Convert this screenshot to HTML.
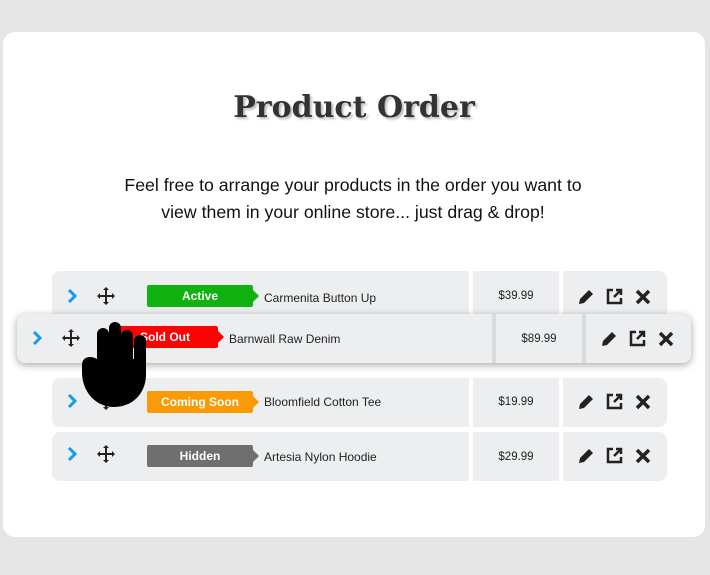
<!DOCTYPE html>
<html><head><meta charset="utf-8"><style>
*{margin:0;padding:0;box-sizing:border-box}
body{width:710px;height:575px;background:#e5e5e5;position:relative;overflow:hidden;font-family:"Liberation Sans",Arial,sans-serif}
.card{position:absolute;left:3px;top:32px;width:702px;height:505px;background:#fff;border-radius:12px}
h1{position:absolute;left:0;width:708px;top:90px;text-align:center;font-family:"DejaVu Serif",serif;font-weight:bold;font-size:30px;color:#333;text-shadow:2px 2px 2px #bbb}
.sub{position:absolute;left:0;width:706px;top:172px;text-align:center;font-size:17.7px;line-height:27px;color:#111}
.row{position:absolute;height:49px}
.seg{position:absolute;top:0;height:49px;background:#eceef0}
.m{border-radius:8px 0 0 8px}
.a{border-radius:0 8px 8px 0}
.badge{position:absolute;top:14px;width:106px;height:22px;color:#fff;font-weight:bold;font-size:12px;line-height:22px;text-align:center;border-radius:2px}
.badge:after{content:"";position:absolute;right:-6px;top:5px;border-left:6px solid;border-left-color:inherit;border-top:6px solid transparent;border-bottom:6px solid transparent}
.name{position:absolute;top:18px;font-size:12px;color:#222}
.price{position:absolute;top:19px;width:100%;text-align:center;font-size:11.5px;color:#222}
svg.i{position:absolute}
.drag{box-shadow:0 2px 8px rgba(0,0,0,.35);border-radius:8px}
</style></head><body>
<div class="card"></div>
<h1>Product Order</h1>
<div class="sub">Feel free to arrange your products in the order you want to<br>view them in your online store... just drag &amp; drop!</div>

<div class="row" style="left:52px;top:271px;width:615px">
 <div class="seg m" style="left:0;width:417px">
  <svg class="i" style="left:14px;top:18px" width="12" height="14" viewBox="0 0 12 14"><path d="M3 1l6 6-6 6" stroke="#1a9be6" stroke-width="3" fill="none"/></svg>
  <svg class="i" style="left:44px;top:15px" width="20" height="20" viewBox="0 0 20 20"><path d="M10 1l3 3h-2v5h5V7l3 3-3 3v-2h-5v5h2l-3 3-3-3h2v-5H4v2L1 10l3-3v2h5V4H7z" fill="#222"/></svg>
  <div class="badge" style="left:95px;background:#0fb20f;border-color:#0fb20f">Active</div>
  <div class="name" style="left:212px;top:20px">Carmenita Button Up</div>
 </div>
 <div class="seg" style="left:421px;width:86px"><div class="price">$39.99</div></div>
 <div class="seg a" style="left:511px;width:104px">
  <svg class="i" style="left:14px;top:17px" width="18" height="18" viewBox="0 0 18 18"><path d="M12 2l4 4-9 9-5 1 1-5z" fill="#222"/></svg>
  <svg class="i" style="left:43px;top:17px" width="17" height="17" viewBox="0 0 17 17"><path d="M7 2H2v13h13v-5" stroke="#222" stroke-width="2.5" fill="none"/><path d="M8 9l7-7M10 2h5v5" stroke="#222" stroke-width="2.5" fill="none"/></svg>
  <svg class="i" style="left:72px;top:18px" width="16" height="16" viewBox="0 0 16 16"><path d="M2 2l12 12M14 2L2 14" stroke="#222" stroke-width="3.5"/></svg>
 </div>
</div>

<div class="row" style="left:52px;top:378px;width:615px">
 <div class="seg m" style="left:0;width:417px">
  <svg class="i" style="left:14px;top:16px" width="12" height="14" viewBox="0 0 12 14"><path d="M3 1l6 6-6 6" stroke="#1a9be6" stroke-width="3" fill="none"/></svg>
  <svg class="i" style="left:44px;top:13px" width="20" height="20" viewBox="0 0 20 20"><path d="M10 1l3 3h-2v5h5V7l3 3-3 3v-2h-5v5h2l-3 3-3-3h2v-5H4v2L1 10l3-3v2h5V4H7z" fill="#222"/></svg>
  <div class="badge" style="left:95px;top:13px;background:#fb9a07;border-color:#fb9a07">Coming Soon</div>
  <div class="name" style="left:212px;top:17px">Bloomfield Cotton Tee</div>
 </div>
 <div class="seg" style="left:421px;width:86px"><div class="price" style="top:18px">$19.99</div></div>
 <div class="seg a" style="left:511px;width:104px">
  <svg class="i" style="left:14px;top:15px" width="18" height="18" viewBox="0 0 18 18"><path d="M12 2l4 4-9 9-5 1 1-5z" fill="#222"/></svg>
  <svg class="i" style="left:43px;top:15px" width="17" height="17" viewBox="0 0 17 17"><path d="M7 2H2v13h13v-5" stroke="#222" stroke-width="2.5" fill="none"/><path d="M8 9l7-7M10 2h5v5" stroke="#222" stroke-width="2.5" fill="none"/></svg>
  <svg class="i" style="left:72px;top:16px" width="16" height="16" viewBox="0 0 16 16"><path d="M2 2l12 12M14 2L2 14" stroke="#222" stroke-width="3.5"/></svg>
 </div>
</div>

<div class="row" style="left:52px;top:432px;width:615px">
 <div class="seg m" style="left:0;width:417px">
  <svg class="i" style="left:14px;top:15px" width="12" height="14" viewBox="0 0 12 14"><path d="M3 1l6 6-6 6" stroke="#1a9be6" stroke-width="3" fill="none"/></svg>
  <svg class="i" style="left:44px;top:12px" width="20" height="20" viewBox="0 0 20 20"><path d="M10 1l3 3h-2v5h5V7l3 3-3 3v-2h-5v5h2l-3 3-3-3h2v-5H4v2L1 10l3-3v2h5V4H7z" fill="#222"/></svg>
  <div class="badge" style="left:95px;top:13px;background:#6f6f6f;border-color:#6f6f6f">Hidden</div>
  <div class="name" style="left:212px;top:18px">Artesia Nylon Hoodie</div>
 </div>
 <div class="seg" style="left:421px;width:86px"><div class="price">$29.99</div></div>
 <div class="seg a" style="left:511px;width:104px">
  <svg class="i" style="left:14px;top:15px" width="18" height="18" viewBox="0 0 18 18"><path d="M12 2l4 4-9 9-5 1 1-5z" fill="#222"/></svg>
  <svg class="i" style="left:43px;top:15px" width="17" height="17" viewBox="0 0 17 17"><path d="M7 2H2v13h13v-5" stroke="#222" stroke-width="2.5" fill="none"/><path d="M8 9l7-7M10 2h5v5" stroke="#222" stroke-width="2.5" fill="none"/></svg>
  <svg class="i" style="left:72px;top:16px" width="16" height="16" viewBox="0 0 16 16"><path d="M2 2l12 12M14 2L2 14" stroke="#222" stroke-width="3.5"/></svg>
 </div>
</div>

<div class="row drag" style="left:17px;top:314px;width:674px;background:#d8dadc">
 <div class="seg m" style="left:0;width:475px">
  <svg class="i" style="left:14px;top:17px" width="12" height="14" viewBox="0 0 12 14"><path d="M3 1l6 6-6 6" stroke="#1a9be6" stroke-width="3" fill="none"/></svg>
  <svg class="i" style="left:44px;top:14px" width="20" height="20" viewBox="0 0 20 20"><path d="M10 1l3 3h-2v5h5V7l3 3-3 3v-2h-5v5h2l-3 3-3-3h2v-5H4v2L1 10l3-3v2h5V4H7z" fill="#222"/></svg>
  <div class="badge" style="left:95px;top:12px;width:106px;background:#fb0303;border-color:#fb0303">Sold Out</div>
  <div class="name" style="left:212px;top:18px">Barnwall Raw Denim</div>
 </div>
 <div class="seg" style="left:479px;width:86px"><div class="price">$89.99</div></div>
 <div class="seg a" style="left:569px;width:105px">
  <svg class="i" style="left:14px;top:16px" width="18" height="18" viewBox="0 0 18 18"><path d="M12 2l4 4-9 9-5 1 1-5z" fill="#222"/></svg>
  <svg class="i" style="left:43px;top:16px" width="17" height="17" viewBox="0 0 17 17"><path d="M7 2H2v13h13v-5" stroke="#222" stroke-width="2.5" fill="none"/><path d="M8 9l7-7M10 2h5v5" stroke="#222" stroke-width="2.5" fill="none"/></svg>
  <svg class="i" style="left:72px;top:17px" width="16" height="16" viewBox="0 0 16 16"><path d="M2 2l12 12M14 2L2 14" stroke="#222" stroke-width="3.5"/></svg>
 </div>
</div>

<svg style="position:absolute;left:78px;top:320px" width="74" height="88" viewBox="0 0 74 88">
 <g fill="#000">
  <rect x="19" y="8" width="12" height="50" rx="6"/>
  <rect x="31" y="2" width="12" height="56" rx="6"/>
  <rect x="43" y="10" width="12" height="48" rx="6"/>
  <rect x="56" y="15" width="12" height="45" rx="6"/>
  <path d="M4 45c0-8 8-10 15-6v0h49v15c0 20-14 33-32 33S4 72 4 52z"/>
 </g>
</svg>
</body></html>
